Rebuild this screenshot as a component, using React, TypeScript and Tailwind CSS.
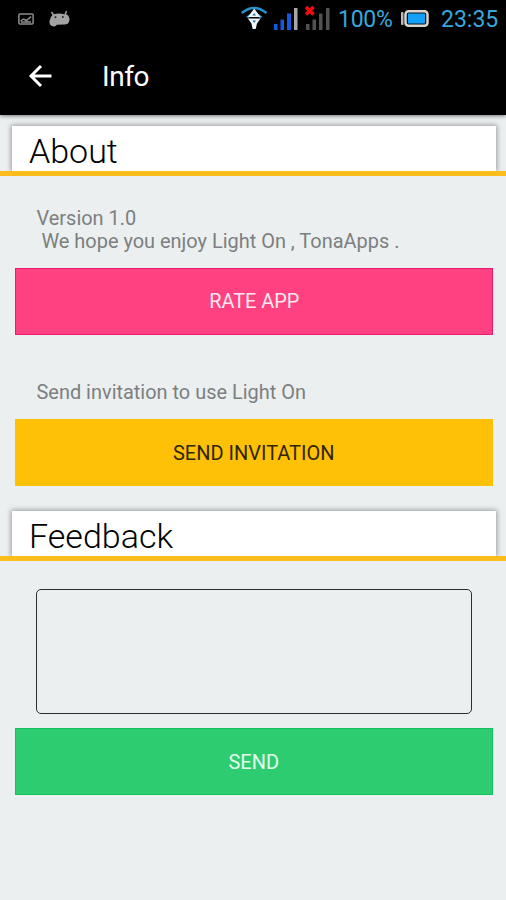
import { ReactNode } from "react";

function StatusBar() {
  return (
    <div className="flex h-[38px] items-center pr-[7px] text-[#38a8dc]">
      <svg className="ml-[18px]" width="16" height="12" viewBox="0 0 16 12" fill="none" stroke="#8c8c8c" strokeWidth="1.5">
        <rect x="0.9" y="0.9" width="14.2" height="10.2" rx="1" />
        <path d="M2.500 8l3-2 3 1.500L13 3.600M3 9h10" />
      </svg>
      <svg className="ml-[14px]" width="23" height="18" viewBox="0 0 23 18" fill="#a3a3a3">
        <path d="M3.500 2l2 3M18.500 1l-1.500 4" stroke="#a3a3a3" strokeWidth="1.500" />
        <path d="M5 4.500Q11 2.500 17 4.500Q19 3.800 20.500 6Q22.500 9 21 12Q19.500 15 16 14.500L9 14.800Q7 17.500 3.500 15.800Q1 14.500 1.500 11Q2 7 5 4.500Z" />
        <circle cx="7.500" cy="7.300" r="1" fill="#222" />
        <circle cx="14.800" cy="7" r="1" fill="#222" />
      </svg>
      <div className="flex-1" />
      <svg width="90" height="28" viewBox="0 0 90 28">
        <path d="M0.800 8Q13 -2 25.500 8" fill="none" stroke="#258fc9" strokeWidth="2.500" />
        <path d="M6 12.500Q13.300 6 20.500 12.500" fill="none" stroke="#258fc9" strokeWidth="2.500" />
        <path d="M13.200 3.500l6.300 8.500H6.900zM6.900 13.500h12.600l-3.500 5-1.300 5.500h-3l-1.300-5.500z" fill="#eef7fc" />
        <path d="M13.200 8l1.800 2.500h-3.600zM11.400 15.500h3.600l-1.800 2.500z" fill="#28749b" />
        <path d="M33 19h3.500v6H33zM39.500 14.500H43V25h-3.500zM46 8.500h4V25h-4z" fill="#1559de" />
        <path d="M53 3h3.500v22H53z" fill="#a8a8a8" />
        <path d="M65 19h3.500v6H65zM71.500 14.500H75V25h-3.500zM78 8.500h3.500V25H78zM85 3h3.500v22H85z" fill="#515151" />
        <path d="M65 2l7.500 7.500M72.500 2L65 9.500" stroke="#f30b12" strokeWidth="3.500" />
      </svg>
      <span className="ml-[7px] w-[55px] whitespace-nowrap text-[23px] leading-none tracking-[-0.3px]">100%</span>
      <svg className="ml-[8px]" width="30" height="19" viewBox="0 0 30 19">
        <rect x="0" y="2" width="2.500" height="13" rx="1" fill="#bcbcbc" />
        <rect x="4.500" y="1.200" width="22" height="14.500" rx="3" fill="#111" stroke="#d9d5d0" strokeWidth="2.500" />
        <rect x="7" y="3.500" width="17" height="10" fill="#12a0fa" />
      </svg>
      <span className="ml-[10px] w-[58px] whitespace-nowrap text-[23px] leading-none">23:35</span>
    </div>
  );
}

function SectionTitle({ children }: { children: ReactNode }) {
  return (
    <div className="overflow-hidden border-b-[5px] border-[#fbbc1c] pt-[11px] pr-[10px] pl-[12px]">
      <div className="h-[45px] bg-white pl-[17px] shadow-[0_0_5px_1px_rgba(0,0,0,0.35)]">
        <h2 className="text-[34px] leading-[50px] font-light text-black">{children}</h2>
      </div>
    </div>
  );
}

function App() {
  return (
    <div className="min-h-[900px] w-full bg-[#ebeff0] font-['Roboto',sans-serif]">
      <header className="h-[115px] bg-black shadow-[0_1px_4px_rgba(0,0,0,0.5)]">
        <StatusBar />
        <div className="flex h-[76px] items-center">
          <svg className="ml-[28px]" width="24" height="24" viewBox="0 0 24 24" fill="none" stroke="#fff" strokeWidth="2.900">
            <path d="M23.500 12H3M13 2L3 12 13 22" />
          </svg>
          <h1 className="ml-[50px] pt-px text-[28px] tracking-[-0.4px] text-white">Info</h1>
        </div>
      </header>

      <SectionTitle>About</SectionTitle>
      <div className="pr-[13px] pl-[14.500px]">
        <p className="pt-[31px] pl-[22px] text-[19.950px] leading-[23px] whitespace-pre text-[#7b7f80]">
          {"Version 1.0\n We hope you enjoy Light On , TonaApps ."}
        </p>
        <button className="mt-[14.500px] h-[67px] w-full border border-[#ec1a70] bg-[#ff4081] pt-[2px] pl-px text-[19.900px] text-[#ffe9f0]">
          RATE APP
        </button>
        <p className="mt-[46px] pl-[22px] text-[19.950px] leading-[23px] text-[#7b7f80]">
          Send invitation to use Light On
        </p>
        <button className="mt-[15px] h-[67px] w-full bg-[#ffc107] pt-px text-[20px] text-[#302603]">
          SEND INVITATION
        </button>
      </div>

      <div className="pt-[14px]">
        <SectionTitle>Feedback</SectionTitle>
      </div>
      <div className="pt-[28px] pr-[13px] pl-[14.500px]">
        <div className="px-[21.500px]">
          <textarea className="block h-[125px] w-full resize-none rounded-[5px] border-[1.500px] border-[#2b2d2e] bg-transparent p-2 outline-none" />
        </div>
        <button className="mt-[14px] h-[67px] w-full border border-[#12c35c] bg-[#2ecc71] pt-[2px] text-[20px] text-[#e3fbec]">
          SEND
        </button>
      </div>
    </div>
  );
}

export default App;
